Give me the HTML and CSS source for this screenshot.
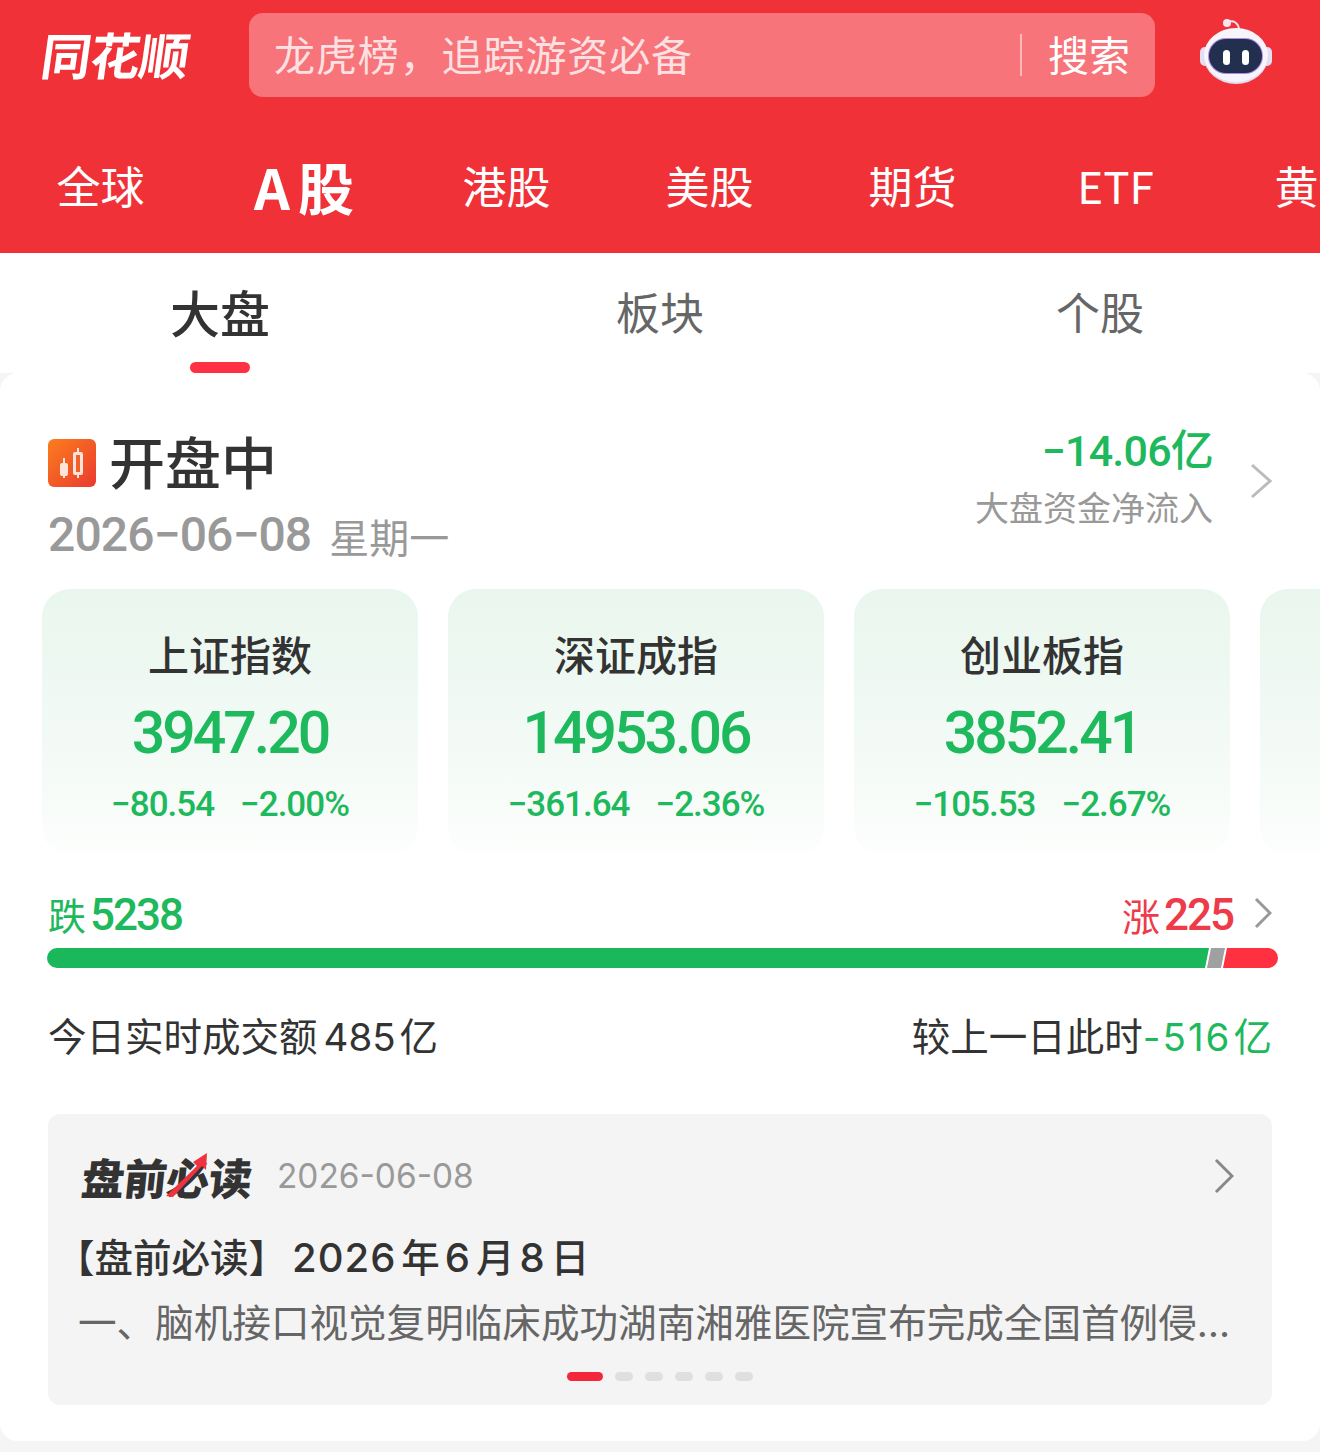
FILE: index.html
```html
<!DOCTYPE html>
<html lang="zh-CN">

<head>
    <meta charset="UTF-8">
    <meta name="viewport" content="width=device-width, initial-scale=1.0">
    <title>同花顺 - A股大盘</title>
    <link rel="stylesheet" href="styles.css">
</head>

<body>
    <header class="top">
        <div class="top-row">
            <div class="logo-wrap"><span class="logo">同花顺</span></div>
            <div class="search">
                <span class="search-hint">龙虎榜，追踪游资必备</span>
                <span class="search-btn">搜索</span>
            </div>
            <svg class="robot" width="76" height="70" viewBox="0 0 76 70">
                <path d="M30 5 C36 3 40 6 41 12" fill="none" stroke="#f0e2ee" stroke-width="2"/>
                <circle cx="29" cy="6" r="4" fill="#f3e6f0"/>
                <rect x="2" y="30" width="10" height="19" rx="5" fill="#e4def2"/>
                <rect x="64" y="30" width="10" height="19" rx="5" fill="#e4def2"/>
                <ellipse cx="38" cy="40" rx="32" ry="27" fill="#e2dcf3"/>
                <ellipse cx="38" cy="38" rx="32" ry="27" fill="#f7f4fb"/>
                <rect x="10" y="21" width="55" height="36" rx="18" fill="#a98be0"/>
                <rect x="11" y="22" width="53" height="34" rx="17" fill="#232f4f"/>
                <rect x="25" y="33" width="7" height="15" rx="3.5" fill="#fff"/>
                <rect x="44" y="33" width="7" height="15" rx="3.5" fill="#fff"/>
            </svg>
        </div>
        <nav class="market-tabs">
            <span class="market-tab">全球</span>
            <span class="market-tab current">A股</span>
            <span class="market-tab">港股</span>
            <span class="market-tab">美股</span>
            <span class="market-tab">期货</span>
            <span class="market-tab">ETF</span>
            <span class="market-tab">黄金</span>
        </nav>
    </header>

    <div class="sub-tabs">
        <span class="sub-tab current">大盘</span>
        <span class="sub-tab">板块</span>
        <span class="sub-tab">个股</span>
    </div>

    <main class="panel">
        <section class="status-row">
            <div>
                <div class="status-title">
                    <svg class="candle-icon" width="48" height="48" viewBox="0 0 48 48">
                        <defs>
                            <linearGradient id="candleBg" x1="0" y1="0" x2="1" y2="1">
                                <stop offset="0" stop-color="#fb7d1c"/>
                                <stop offset="1" stop-color="#ea3a30"/>
                            </linearGradient>
                        </defs>
                        <rect width="48" height="48" rx="6" fill="url(#candleBg)"/>
                        <path d="M16 19v20M30 9v30" stroke="#fde3d8" stroke-width="2"/>
                        <rect x="12" y="24" width="8" height="13" rx="2" fill="#fde3d8"/>
                        <rect x="25" y="13" width="10" height="23" rx="2" fill="#fde3d8"/>
                        <rect x="28" y="16" width="4" height="17" fill="#f3602a"/>
                    </svg>
                    <h1>开盘中</h1>
                </div>
                <div class="status-date"><span class="date-num">2026−06−08</span><span class="date-week">星期一</span></div>
            </div>
            <div class="flow">
                <div class="flow-text">
                    <div class="flow-num">−14.06亿</div>
                    <div class="flow-label">大盘资金净流入</div>
                </div>
                <svg class="chev" width="22" height="36" viewBox="0 0 22 36"><path d="M2 2 L20 18 L2 34" fill="none" stroke="#bbb" stroke-width="3"/></svg>
            </div>
        </section>

        <section class="index-row">
            <div class="index-card">
                <div class="index-name">上证指数</div>
                <div class="index-value">3947.20</div>
                <div class="index-change"><span>−80.54</span><span>−2.00%</span></div>
            </div>
            <div class="index-card">
                <div class="index-name">深证成指</div>
                <div class="index-value">14953.06</div>
                <div class="index-change"><span>−361.64</span><span>−2.36%</span></div>
            </div>
            <div class="index-card">
                <div class="index-name">创业板指</div>
                <div class="index-value">3852.41</div>
                <div class="index-change"><span>−105.53</span><span>−2.67%</span></div>
            </div>
            <div class="index-card"></div>
        </section>

        <section class="breadth">
            <div class="breadth-text">
                <span class="down"><span class="breadth-cn">跌</span>5238</span>
                <span class="up"><span class="breadth-cn">涨</span>225<svg class="chev-small" width="18" height="32" viewBox="0 0 18 32"><path d="M2 2 L16 16 L2 30" fill="none" stroke="#999" stroke-width="3"/></svg></span>
            </div>
            <div class="bar">
                <div class="bar-down"></div>
                <div class="bar-flat"></div>
                <div class="bar-up"></div>
            </div>
        </section>

        <section class="turnover">
            <span>今日实时成交额<span class="turnover-num">485</span>亿</span>
            <span>较上一日此时<span class="turnover-diff">-516<span class="turnover-unit">亿</span></span></span>
        </section>

        <section class="news">
            <div class="news-head">
                <div class="news-brand">
                    <span class="news-brand-text">盘前必读</span>
                    <svg class="news-arrow" width="44" height="46" viewBox="0 0 44 46"><path d="M0 44 L31 14 L27 10 L41 1 L40 18 L36 14 L7 45 Z" fill="#f0323f"/></svg>
                </div>
                <span class="news-date">2026-06-08</span>
                <svg class="news-chev" width="20" height="36" viewBox="0 0 20 36"><path d="M2 2 L18 18 L2 34" fill="none" stroke="#888" stroke-width="3"/></svg>
            </div>
            <div class="news-title">【盘前必读】<span class="num">2026</span>年<span class="num">6</span>月<span class="num">8</span>日</div>
            <div class="news-desc">一、脑机接口视觉复明临床成功湖南湘雅医院宣布完成全国首例侵入式脑机接口视觉复明手术</div>
            <div class="dots">
                <i class="dot current"></i><i class="dot"></i><i class="dot"></i><i class="dot"></i><i class="dot"></i><i class="dot"></i>
            </div>
        </section>
    </main>
</body>

</html>
```

FILE: styles.css
```css
* {
    margin: 0;
    padding: 0;
    box-sizing: border-box;
}

html,
body {
    height: 100%;
}

body {
    font-family: "Noto Sans CJK SC", "Noto Sans", sans-serif;
    background: #f5f5f5;
    color: #333;
    overflow: hidden;
}

/* Red header */
.top {
    height: 253px;
    background: #f03238;
    color: #fff;
    overflow: hidden;
}

.top-row {
    display: flex;
    align-items: center;
    height: 84px;
    margin-top: 13px;
    padding-left: 42px;
}

.logo-wrap {
    width: 207px;
    margin-bottom: 4px;
}

.logo {
    display: inline-block;
    font-size: 50px;
    line-height: 84px;
    font-weight: 700;
    letter-spacing: -1px;
    transform: skewX(-8deg);
}

.search {
    display: flex;
    align-items: center;
    justify-content: space-between;
    width: 906px;
    height: 84px;
    padding: 0 25px;
    background: #f6747a;
    border-radius: 14px;
    font-size: 41px;
    line-height: 80px;
}

.search-hint {
    color: #fde0e1;
    letter-spacing: 0.9px;
    margin-bottom: 4px;
}

.search-btn {
    height: 42px;
    border-left: 2px solid #fbb9bb;
    padding-left: 26px;
    line-height: 38px;
    color: #fff;
}

.robot {
    margin-left: 43px;
    margin-bottom: 6px;
}

.market-tabs {
    display: flex;
    align-items: center;
    height: 156px;
    margin-left: -1px;
    padding-top: 20px;
    white-space: nowrap;
}

.market-tab {
    flex: 0 0 203px;
    text-align: center;
    font-size: 44px;
}

.market-tab.current {
    padding-left: 9px;
    font-size: 56px;
    font-weight: 700;
    letter-spacing: 8px;
}

/* Sub tabs */
.sub-tabs {
    display: flex;
    height: 120px;
    background: #fff;
}

.sub-tab {
    position: relative;
    flex: 1;
    text-align: center;
    line-height: 116px;
    font-size: 44px;
    color: #666;
}

.sub-tab.current {
    color: #333;
    font-size: 50px;
    font-weight: 500;
}

.sub-tab.current::after {
    content: "";
    position: absolute;
    left: 190px;
    bottom: 0;
    width: 60px;
    height: 11px;
    background: #ff3044;
    border-radius: 6px;
}

/* Panel */
.panel {
    height: 1068px;
    padding: 0 48px;
    background: #fff;
    border-radius: 18px;
    overflow: hidden;
}

.status-row {
    display: flex;
    justify-content: space-between;
    height: 216px;
    padding-top: 55px;
}

.status-title {
    display: flex;
    align-items: center;
    height: 70px;
}

.status-title h1 {
    margin: 0 0 6px 13px;
    font-size: 56px;
    font-weight: 500;
    line-height: 70px;
}

.status-date {
    display: flex;
    align-items: center;
    margin-top: 8px;
    color: #999;
}

.date-num {
    font-family: Roboto, sans-serif;
    font-size: 48px;
    font-weight: 500;
    line-height: 56px;
    letter-spacing: -0.9px;
}

.date-week {
    margin: 2px 0 0 18px;
    font-size: 40px;
    line-height: 56px;
}

.flow {
    display: flex;
    align-items: center;
    height: 100px;
    margin-top: 3px;
}

.flow-text {
    text-align: right;
}

.flow-num {
    margin-top: -4px;
    font-family: Roboto, "Noto Sans CJK SC", sans-serif;
    font-size: 43px;
    font-weight: 500;
    line-height: 48px;
    letter-spacing: -0.8px;
    color: #1eb85d;
}

.flow-label {
    margin-top: 7px;
    font-size: 34px;
    line-height: 50px;
    color: #999;
}

.chev {
    margin-left: 37px;
}

/* Index cards */
.index-row {
    display: flex;
    gap: 30px;
    margin: 0 -48px 0 -6px;
    overflow: hidden;
}

.index-card {
    flex: 0 0 376px;
    height: 266px;
    padding-top: 37px;
    border-radius: 28px;
    background: linear-gradient(#e9f6ee, #f5fbf7 70%, #fdfefd);
    text-align: center;
}

.index-name {
    font-size: 41px;
    font-weight: 500;
    line-height: 54px;
}

.index-value {
    margin-top: 19px;
    font-family: Roboto, sans-serif;
    font-size: 59px;
    font-weight: 500;
    line-height: 68px;
    letter-spacing: -3px;
    color: #1eb85d;
}

.index-change {
    display: flex;
    justify-content: center;
    gap: 26px;
    margin-top: 16px;
    font-family: Roboto, sans-serif;
    font-size: 35px;
    font-weight: 500;
    line-height: 44px;
    letter-spacing: -1px;
    color: #1eb85d;
}

/* Up / down bar */
.breadth {
    margin-top: 34px;
}

.breadth-text {
    display: flex;
    justify-content: space-between;
    font-family: Roboto, sans-serif;
    font-size: 44px;
    font-weight: 500;
    line-height: 50px;
    letter-spacing: -2px;
}

.down {
    color: #1eb85d;
}

.up {
    display: flex;
    align-items: center;
    color: #ee3b4a;
}

.breadth-cn {
    margin-right: 4px;
    font-family: "Noto Sans CJK SC", sans-serif;
    font-size: 38px;
    font-weight: 400;
    letter-spacing: 0;
}

.chev-small {
    margin: 0 0 3px 21px;
}

.bar {
    display: flex;
    height: 20px;
    margin: 8px -6px 0 -1px;
}

.bar-down {
    flex: 1;
    margin-right: -2px;
    background: #1bb85b;
    border-radius: 10px 0 0 10px;
    clip-path: polygon(0 0, 100% 0, calc(100% - 4px) 100%, 0 100%);
}

.bar-flat {
    flex: 0 0 18px;
    margin-right: -2px;
    background: #a0a0a0;
    clip-path: polygon(4px 0, 100% 0, calc(100% - 4px) 100%, 0 100%);
}

.bar-up {
    flex: 0 0 55px;
    background: #ff3040;
    border-radius: 0 10px 10px 0;
    clip-path: polygon(4px 0, 100% 0, 100% 100%, 0 100%);
}

.turnover {
    display: flex;
    justify-content: space-between;
    margin-top: 39px;
    font-size: 38.5px;
    line-height: 54px;
}

.turnover-num {
    margin: 0 4px 0 6px;
    font-family: Inter, sans-serif;
}

.turnover-diff {
    font-family: Inter, "Noto Sans CJK SC", sans-serif;
    letter-spacing: 2px;
    color: #1eb85d;
}

.turnover-unit {
    margin-left: 2px;
    letter-spacing: 0;
}

/* News box */
.news {
    height: 291px;
    margin-top: 50px;
    padding: 29px 32px 0;
    background: #f4f4f4;
    border-radius: 12px;
}

.news-head {
    display: flex;
    align-items: center;
    height: 66px;
}

.news-brand {
    position: relative;
    margin-left: 2px;
}

.news-brand-text {
    display: inline-block;
    font-size: 43px;
    font-weight: 900;
    letter-spacing: -0.5px;
    transform: skewX(-6deg);
}

.news-arrow {
    position: absolute;
    left: 84px;
    top: 7px;
}

.news-date {
    margin-left: 25px;
    font-family: Inter, sans-serif;
    font-size: 33.4px;
    color: #999;
}

.news-chev {
    margin-left: auto;
    margin-right: 6px;
}

.news-title {
    margin: 16px 0 0 -24px;
    font-size: 38.5px;
    font-weight: 500;
    line-height: 60px;
}

.num {
    margin: 0 5px;
    font-family: Inter, sans-serif;
    font-size: 40px;
    letter-spacing: 1px;
}

.news-desc {
    margin: 8px -2px 0 -2px;
    font-family: Inter, "Noto Sans CJK SC", sans-serif;
    font-size: 38.6px;
    line-height: 54px;
    color: #666;
    white-space: nowrap;
    overflow: hidden;
    text-overflow: ellipsis;
}

.dots {
    display: flex;
    justify-content: center;
    gap: 12px;
    margin-top: 22px;
}

.dot {
    width: 18px;
    height: 9px;
    border-radius: 5px;
    background: #dfdfdf;
}

.dot.current {
    width: 36px;
    background: #f4263c;
}
```
